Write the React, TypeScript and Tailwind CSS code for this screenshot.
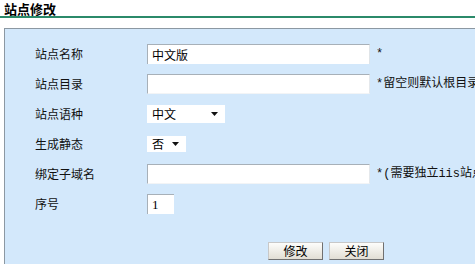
const font = { fontFamily: '"Noto Sans CJK SC", sans-serif' }
const noteFont = { fontFamily: '"Liberation Mono", "Noto Sans CJK SC", monospace' }

function Field({ w }: { w: string }) {
  return (
    <div
      className={`${w} h-[20px] bg-white border-t border-l border-[#a7b0b8] border-r border-b border-r-[#e4e8ec] border-b-[#f2f4f6]`}
    />
  )
}

function Select({ value, w }: { value: string; w: string }) {
  return (
    <div className={`${w} bg-white flex items-center justify-between pl-[5px] pr-[7px] text-[12px] text-black`}>
      <span>{value}</span>
      <svg width="7" height="4" viewBox="0 0 7 4">
        <path d="M0 0H7L3.5 4Z" fill="#111" />
      </svg>
    </div>
  )
}

function Btn({ label }: { label: string }) {
  return (
    <button className="w-[55px] h-[18px] flex items-center justify-center text-[12px] leading-none text-black bg-gradient-to-b from-[#fdfdfb] to-[#e2ded4] border border-t-[#c8c8c8] border-l-[#c8c8c8] border-r-[#707070] border-b-[#707070]">
      {label}
    </button>
  )
}

const rows: { label: string; input: JSX.Element; note?: string }[] = [
  {
    label: "站点名称",
    input: (
      <div className="w-[223px] h-[20px] bg-white border-t border-l border-[#a7b0b8] border-r border-r-[#dfe4e8] flex items-center pl-[4px] text-[12px] text-black">
        中文版
      </div>
    ),
    note: "*",
  },
  { label: "站点目录", input: <Field w="w-[223px]" />, note: "*留空则默认根目录" },
  { label: "站点语种", input: <Select value="中文" w="w-[78px] h-[18px]" /> },
  { label: "生成静态", input: <Select value="否" w="w-[39px] h-[16px]" /> },
  { label: "绑定子域名", input: <Field w="w-[223px]" />, note: "*(需要独立iis站点)" },
  {
    label: "序号",
    input: (
      <div
        className="w-[27px] h-[20px] bg-white border-t border-l border-[#a7b0b8] flex items-center pl-[4px] text-[13px] text-black"
        style={{ fontFamily: '"Liberation Serif", serif' }}
      >
        1
      </div>
    ),
  },
]

export default function App() {
  return (
    <div className="w-[475px] h-[264px] overflow-hidden bg-white" style={font}>
      <div className="h-[18px] border-b-2 border-[#2b8a6a] pl-[4px] pt-[1px] text-[13px] font-bold leading-[15px] text-black">
        站点修改
      </div>
      <div className="mt-[10px] ml-[4px] w-[600px] h-[300px] bg-[#d3e8fb] border-t border-l border-[#8c98a2] pt-[10px]">
        {rows.map((r) => (
          <div key={r.label} className="h-[30px] flex items-center">
            <div className="w-[142px] pl-[30px] text-[12px] text-[#111]">{r.label}</div>
            <div className="w-[229px] flex items-center">{r.input}</div>
            {r.note && (
              <div className="text-[12px] text-[#111] whitespace-nowrap" style={noteFont}>
                {r.note}
              </div>
            )}
          </div>
        ))}
        <div className="flex gap-[6px] pl-[263px] mt-[23px]">
          <Btn label="修改" />
          <Btn label="关闭" />
        </div>
      </div>
    </div>
  )
}
